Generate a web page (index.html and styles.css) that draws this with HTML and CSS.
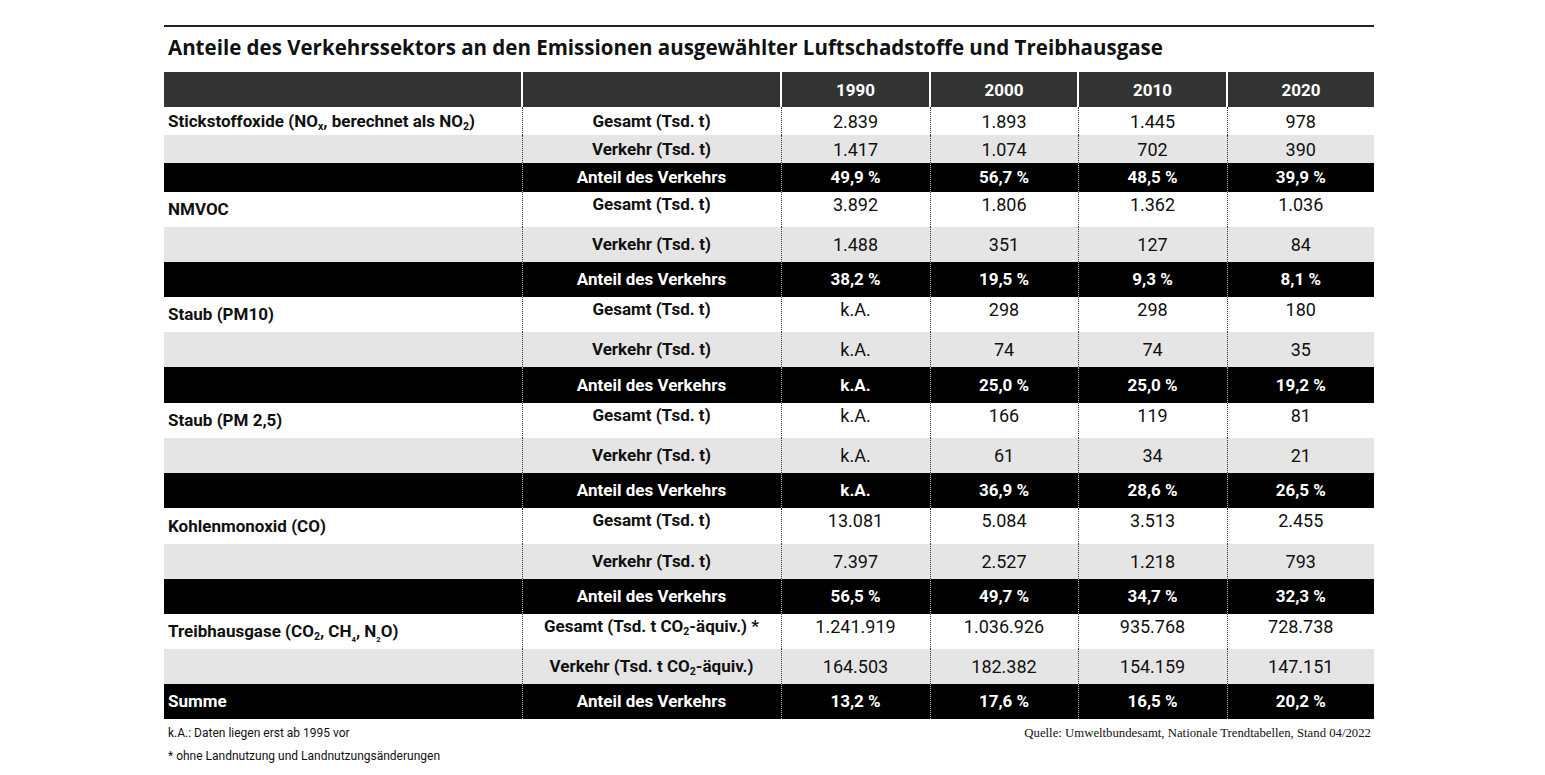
FILE: index.html
```html
<!DOCTYPE html>
<html lang="de">
<head>
<meta charset="utf-8">
<title>Anteile des Verkehrssektors</title>
<link rel="stylesheet" href="styles.css">
</head>
<body>
<div class="page">
  <div class="rule"></div>
  <h1 class="title">Anteile des Verkehrssektors an den Emissionen ausgewählter Luftschadstoffe und Treibhausgase</h1>
  <table class="tbl">
    <colgroup>
      <col class="c1"><col class="c2"><col class="c3"><col class="c4"><col class="c5"><col class="c6">
    </colgroup>
    <thead>
      <tr class="head"><th></th><th></th><th>1990</th><th>2000</th><th>2010</th><th>2020</th></tr>
    </thead>
    <tbody>
      <tr class="g first"><td class="lab">Stickstoffoxide (NO<sub>x</sub>, berechnet als NO<sub>2</sub>)</td><td class="kind">Gesamt (Tsd. t)</td><td>2.839</td><td>1.893</td><td>1.445</td><td>978</td></tr>
      <tr class="v first"><td class="lab"></td><td class="kind">Verkehr (Tsd. t)</td><td>1.417</td><td>1.074</td><td>702</td><td>390</td></tr>
      <tr class="a first"><td class="lab"></td><td class="kind">Anteil des Verkehrs</td><td>49,9 %</td><td>56,7 %</td><td>48,5 %</td><td>39,9 %</td></tr>

      <tr class="g"><td class="lab">NMVOC</td><td class="kind">Gesamt (Tsd. t)</td><td>3.892</td><td>1.806</td><td>1.362</td><td>1.036</td></tr>
      <tr class="v"><td class="lab"></td><td class="kind">Verkehr (Tsd. t)</td><td>1.488</td><td>351</td><td>127</td><td>84</td></tr>
      <tr class="a"><td class="lab"></td><td class="kind">Anteil des Verkehrs</td><td>38,2 %</td><td>19,5 %</td><td>9,3 %</td><td>8,1 %</td></tr>

      <tr class="g"><td class="lab">Staub (PM10)</td><td class="kind">Gesamt (Tsd. t)</td><td>k.A.</td><td>298</td><td>298</td><td>180</td></tr>
      <tr class="v"><td class="lab"></td><td class="kind">Verkehr (Tsd. t)</td><td>k.A.</td><td>74</td><td>74</td><td>35</td></tr>
      <tr class="a tall"><td class="lab"></td><td class="kind">Anteil des Verkehrs</td><td>k.A.</td><td>25,0 %</td><td>25,0 %</td><td>19,2 %</td></tr>

      <tr class="g"><td class="lab">Staub (PM 2,5)</td><td class="kind">Gesamt (Tsd. t)</td><td>k.A.</td><td>166</td><td>119</td><td>81</td></tr>
      <tr class="v"><td class="lab"></td><td class="kind">Verkehr (Tsd. t)</td><td>k.A.</td><td>61</td><td>34</td><td>21</td></tr>
      <tr class="a"><td class="lab"></td><td class="kind">Anteil des Verkehrs</td><td>k.A.</td><td>36,9 %</td><td>28,6 %</td><td>26,5 %</td></tr>

      <tr class="g tall"><td class="lab">Kohlenmonoxid (CO)</td><td class="kind">Gesamt (Tsd. t)</td><td>13.081</td><td>5.084</td><td>3.513</td><td>2.455</td></tr>
      <tr class="v"><td class="lab"></td><td class="kind">Verkehr (Tsd. t)</td><td>7.397</td><td>2.527</td><td>1.218</td><td>793</td></tr>
      <tr class="a"><td class="lab"></td><td class="kind">Anteil des Verkehrs</td><td>56,5 %</td><td>49,7 %</td><td>34,7 %</td><td>32,3 %</td></tr>

      <tr class="g"><td class="lab">Treibhausgase (CO<sub>2</sub>, CH<sub class="tiny">4</sub>, N<sub class="tiny">2</sub>O)</td><td class="kind">Gesamt (Tsd. t CO<sub>2</sub>-äquiv.) *</td><td>1.241.919</td><td>1.036.926</td><td>935.768</td><td>728.738</td></tr>
      <tr class="v"><td class="lab"></td><td class="kind">Verkehr (Tsd. t CO<sub>2</sub>-äquiv.)</td><td>164.503</td><td>182.382</td><td>154.159</td><td>147.151</td></tr>
      <tr class="a"><td class="lab">Summe</td><td class="kind">Anteil des Verkehrs</td><td>13,2 %</td><td>17,6 %</td><td>16,5 %</td><td>20,2 %</td></tr>
    </tbody>
  </table>
  <div class="foot">
    <div class="notes">
      <p>k.A.: Daten liegen erst ab 1995 vor</p>
      <p>* ohne Landnutzung und Landnutzungsänderungen</p>
    </div>
    <p class="source">Quelle: Umweltbundesamt, Nationale Trendtabellen, Stand 04/2022</p>
  </div>
</div>
</body>
</html>
```
FILE: styles.css
```css
html, body {
  margin: 0;
  padding: 0;
  background: #fff;
}
body {
  font-family: Roboto, "Liberation Sans", sans-serif;
  color: #111;
}
.page {
  width: 1210px;
  margin-left: 164px;
  padding-top: 25px;
}
.rule {
  height: 2px;
  background: #222;
}
.title {
  margin: 0;
  padding: 6px 0 0 4px;
  height: 45px;
  box-sizing: border-box;
  font-family: "Open Sans", Roboto, sans-serif;
  font-size: 20.5px;
  font-weight: 700;
  line-height: 28px;
  color: #111;
}
.tbl {
  width: 1210px;
  border-collapse: collapse;
  table-layout: fixed;
}
.c1 { width: 358px; }
.c2 { width: 259px; }
.c3 { width: 149px; }
.c4 { width: 148px; }
.c5 { width: 149px; }
.c6 { width: 147px; }

.head { height: 35px; }
.head th {
  background: #333;
  color: #fff;
  padding: 0;
  font-size: 17px;
  font-weight: 700;
  line-height: 20px;
  text-align: center;
  vertical-align: middle;
  border-left: 2px solid #fff;
}
.head th:first-child { border-left: none; }

.tbl tbody tr { height: 35px; }
.tbl tbody tr.tall { height: 36px; }
.tbl tbody tr.first { height: 28px; }
.tbl tbody tr.a.first { height: 29px; }

.tbl td {
  padding: 0;
  line-height: 21px;
  text-align: center;
  vertical-align: middle;
  font-size: 18px;
  font-weight: 400;
  border-left: 1px dotted #333;
  white-space: nowrap;
}
.tbl td.lab {
  text-align: left;
  padding-left: 4px;
  font-size: 17px;
  font-weight: 700;
  border-left: none;
}
.tbl td.kind {
  font-size: 17px;
  font-weight: 700;
}
.g td { background: #fff; }
.g td:not(.lab) {
  vertical-align: top;
  padding-top: 2px;
}
.v td { background: #e5e5e5; }
.a td {
  background: #000;
  color: #fff;
  font-size: 17px;
  font-weight: 700;
  border-left-color: #bbb;
}
.g.first td:not(.lab) {
  vertical-align: middle;
  padding-top: 0;
}
sub {
  font-size: 0.62em;
  line-height: 0;
  vertical-align: -0.25em;
}
sub.tiny {
  font-size: 0.45em;
  vertical-align: -0.7em;
}
.foot {
  display: flex;
  justify-content: space-between;
  align-items: flex-start;
  padding: 3px 3px 0 4px;
}
.notes p {
  margin: 0;
  font-size: 12px;
  letter-spacing: 0;
  line-height: 23px;
  color: #111;
}
.source {
  margin: 0;
  font-family: "Liberation Serif", "DejaVu Serif", serif;
  font-size: 12.75px;
  line-height: 23px;
  color: #111;
}
```
